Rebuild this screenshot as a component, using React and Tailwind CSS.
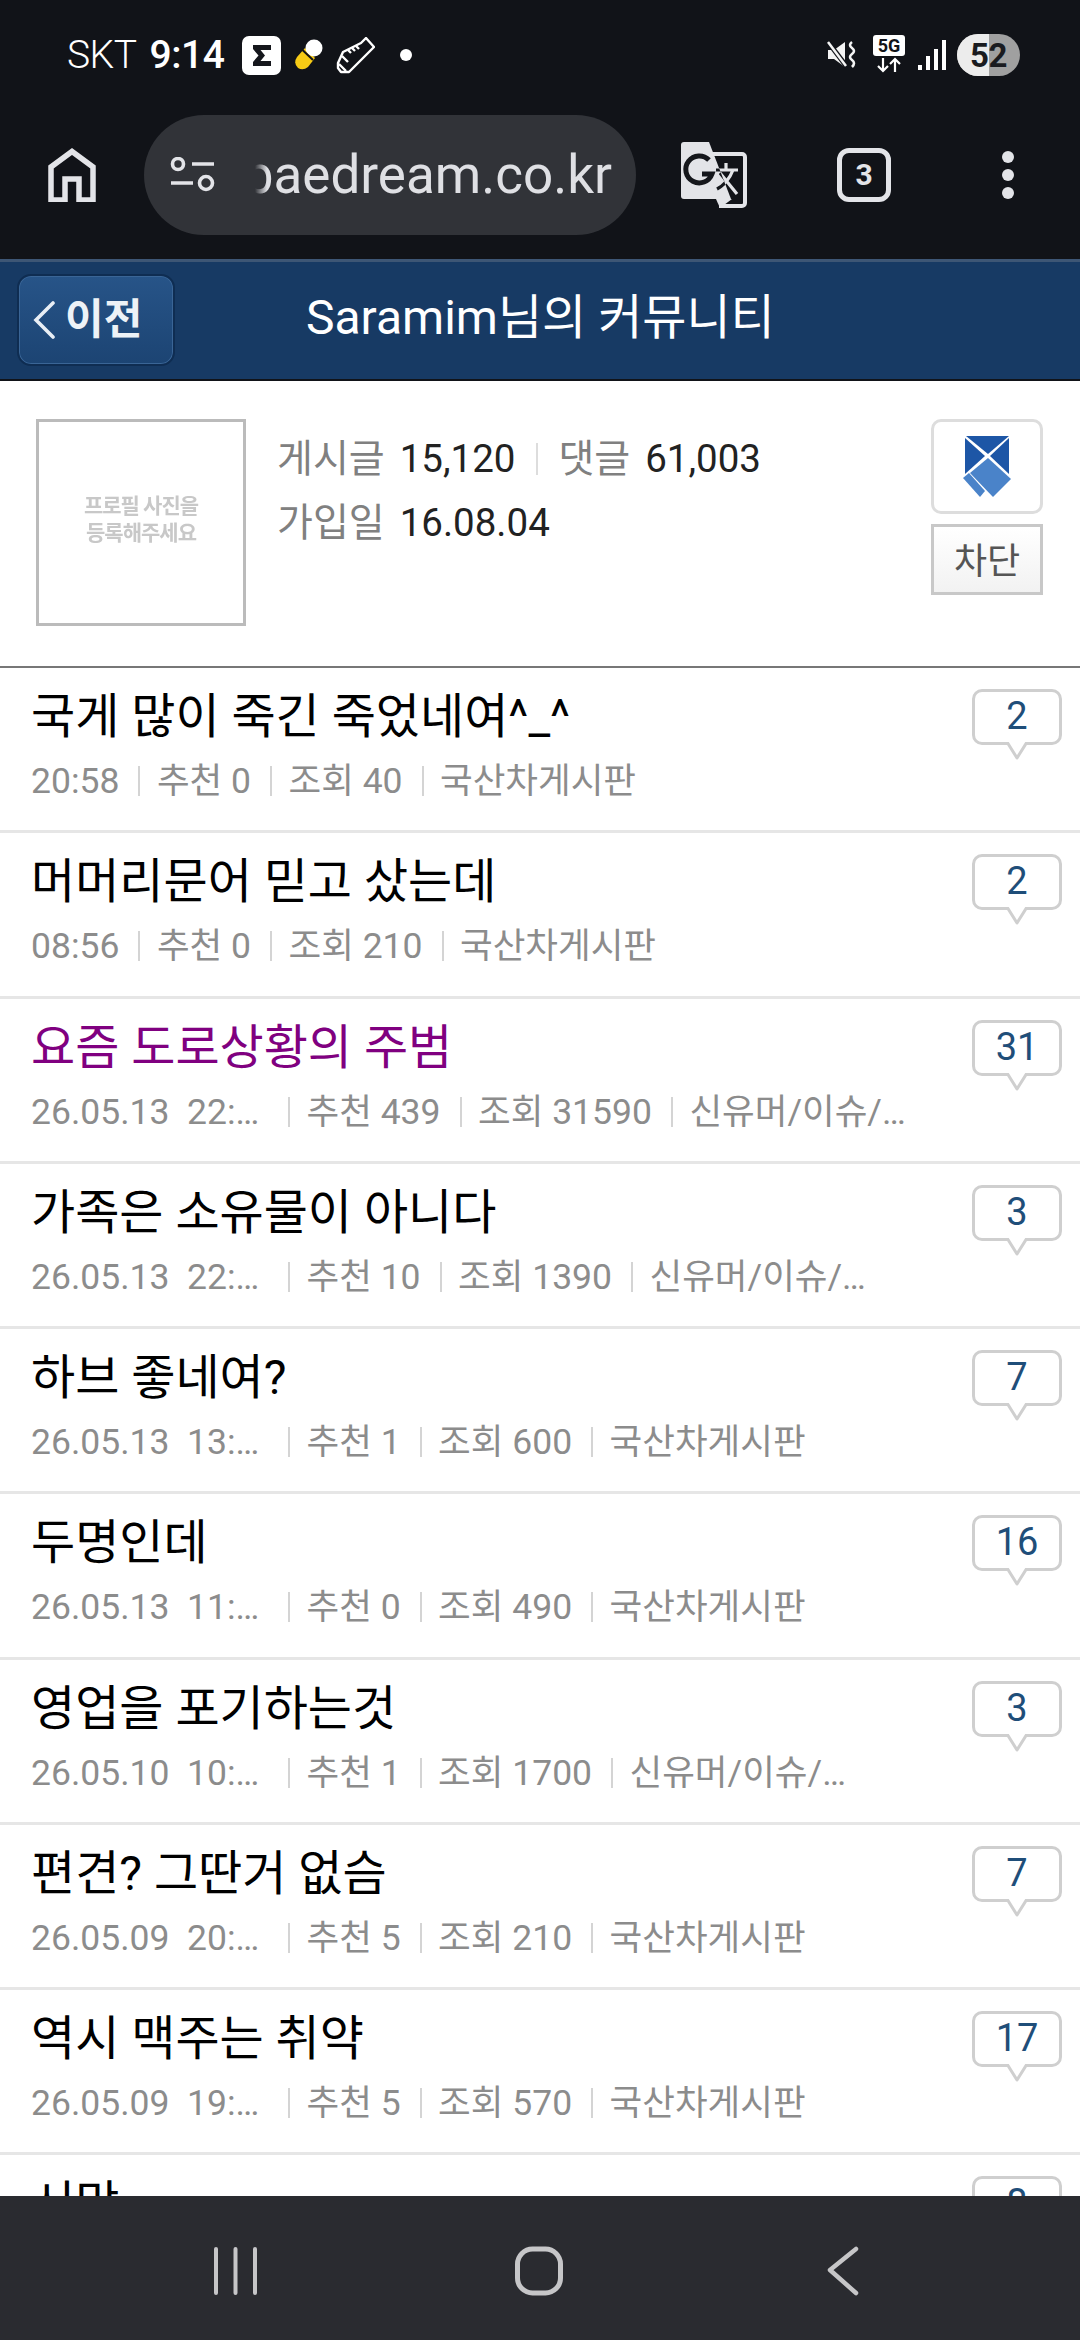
import React from 'react';

const FONT = 'font-["Roboto","Noto_Sans_CJK_KR",sans-serif]';

// last row is cut by the nav bar, only its title and count show
const POSTS = [
  { title: '국게 많이 죽긴 죽었네여^_^', time: '20:58', like: 0, view: 40, board: '국산차게시판', count: 2 },
  { title: '머머리문어 믿고 샀는데', time: '08:56', like: 0, view: 210, board: '국산차게시판', count: 2 },
  { title: '요즘 도로상황의 주범', date: '26.05.13', time: '22:…', like: 439, view: 31590, board: '신유머/이슈/…', count: 31, visited: true },
  { title: '가족은 소유물이 아니다', date: '26.05.13', time: '22:…', like: 10, view: 1390, board: '신유머/이슈/…', count: 3 },
  { title: '하브 좋네여?', date: '26.05.13', time: '13:…', like: 1, view: 600, board: '국산차게시판', count: 7 },
  { title: '두명인데', date: '26.05.13', time: '11:…', like: 0, view: 490, board: '국산차게시판', count: 16 },
  { title: '영업을 포기하는것', date: '26.05.10', time: '10:…', like: 1, view: 1700, board: '신유머/이슈/…', count: 3 },
  { title: '편견? 그딴거 없슴', date: '26.05.09', time: '20:…', like: 5, view: 210, board: '국산차게시판', count: 7 },
  { title: '역시 맥주는 취약', date: '26.05.09', time: '19:…', like: 5, view: 570, board: '국산차게시판', count: 17 },
  { title: '시망', count: 8 },
];

const Sep = () => <span className="w-[2px] h-[30px] bg-[#d4d4d4] ml-[19px] mr-[16.5px] shrink-0" />;

const StatusBar = () => (
  <div className="h-[115px] flex items-center pb-[5px] text-white relative">
    <span className="ml-[67px] text-[39px] leading-none font-light tracking-[-0.5px]">SKT</span>
    <span className="ml-[13px] text-[39px] leading-none font-medium tracking-[-0.5px]">9:14</span>
    {/* app notification icons */}
    <svg className="ml-[18px]" width="39" height="39" viewBox="0 0 39 39">
      <rect width="39" height="39" rx="7" fill="#fff" />
      <path d="M11 9H29V14H18.5L23 19.5L18.5 25H29V30H11V26L16.5 19.5L11 13Z" fill="#15171c" />
    </svg>
    <svg className="ml-[14px]" width="28" height="32" viewBox="0 0 28 32">
      <path d="M10 9L20 19L13 28Q8 32 3 29Q-2 24 2 18Z" fill="#f7cb15" />
      <circle cx="19" cy="9" r="8.5" fill="#fff" />
      <path d="M7.5 11L18 21" stroke="#111318" strokeWidth="2" />
    </svg>
    <svg className="ml-[13px]" width="39" height="37" viewBox="0 0 39 37" fill="none" stroke="#fff" strokeWidth="2.4" strokeLinejoin="round">
      <path d="M2 26L7 15L25 6L30 1L38 10L13 35L5 35L2 31Z" />
      <path d="M3 27L10 34M6 19L12 25M12 13L15 16M16 11L19 14M20 9L23 12" />
    </svg>
    <span className="ml-[25px] w-3 h-3 rounded-full bg-white" />

    {/* system icons */}
    <div className="absolute left-[827px] top-[34px] flex items-center">
      <svg width="30" height="32" viewBox="0 0 30 32">
        <path d="M1 11H7L18 3V23ZM1 11V20H7L18 28V23Z" fill="#f4f4f4" />
        <path d="M1 3L20 28" stroke="#111318" strokeWidth="5" />
        <path d="M1 3L19 27" stroke="#f4f4f4" strokeWidth="2.5" />
        <path d="M25 3Q21 6 25 9T25 15T25 21T25 28" stroke="#f4f4f4" strokeWidth="2.6" fill="none" />
      </svg>
      <svg className="ml-[16px] -mt-[2px]" width="32" height="38" viewBox="0 0 32 38">
        <rect width="32" height="21" rx="3" fill="#fff" />
        <text x="16" y="17" textAnchor="middle" fontSize="18" fontWeight="700" fontFamily="Roboto" fill="#111318">5G</text>
        <path d="M10 23V36M5 31L10 36L15 31M22 37V24M17 29L22 24L27 29" stroke="#fff" strokeWidth="2.2" fill="none" />
      </svg>
      <svg className="ml-[13px]" width="28" height="30" viewBox="0 0 28 30" fill="#fff">
        <rect x="0" y="25" width="4" height="5" />
        <rect x="8" y="16" width="4" height="14" />
        <rect x="16" y="9" width="4" height="21" />
        <rect x="24" y="0" width="4" height="30" />
      </svg>
      <div className="ml-[11px] w-[63px] h-[42px] rounded-full overflow-hidden relative bg-[#a0a0a0] flex items-center justify-center">
        <span className="absolute left-0 top-0 bottom-0 w-[32px] bg-[#ececec]" />
        <span className="relative text-[33px] font-bold leading-none text-[#1a1b20] tracking-[-0.5px]">52</span>
      </div>
    </div>
  </div>
);

const Toolbar = () => (
  <div className="h-[144px] flex items-start relative">
    <svg className="absolute left-[48px] top-[33px]" width="48" height="54" viewBox="0 0 48 54" fill="none" stroke="#e3e4e8" strokeWidth="5.5">
      <path d="M3 52V19L24 3.5L45 19V52H31V31H17V52Z" />
    </svg>
    <div className="absolute left-[144px] top-0 w-[492px] h-[120px] rounded-full bg-[#313338]">
      <svg className="absolute left-[26px] top-[42px]" width="46" height="40" viewBox="0 0 46 40" fill="none" stroke="#e3e4e8" strokeWidth="3.6">
        <circle cx="8" cy="7" r="5.5" />
        <path d="M22 7H44M1 26H23" />
        <circle cx="36" cy="26" r="6.5" />
      </svg>
      <div className="absolute left-[99px] top-0 w-[369px] h-[120px] overflow-hidden flex items-center justify-end">
        <span className="text-[53px] leading-none text-[#dfe0e4] whitespace-nowrap">baedream.co.kr</span>
        <span className="absolute left-0 top-0 bottom-0 w-[24px] bg-gradient-to-r from-[#313338] via-[#313338] to-transparent" />
      </div>
    </div>
    <svg className="absolute left-[681px] top-[27px]" width="66" height="66" viewBox="0 0 66 66" fill="none">
      <defs>
        <clipPath id="leftPage">
          <path d="M3 0H28L50 57H3a3 3 0 0 1-3-3V3a3 3 0 0 1 3-3z" />
        </clipPath>
      </defs>
      <path d="M31 12H61a3 3 0 0 1 3 3V61a3 3 0 0 1-3 3H38" stroke="#e3e4e8" strokeWidth="4" />
      <path d="M35 57H51L39 66Z" fill="#e3e4e8" />
      <path d="M45 21V27M35 28H57M52 28Q47 41 36 47M39 31L56 52" stroke="#e3e4e8" strokeWidth="3.2" />
      <path d="M3 0H28L50 57H3a3 3 0 0 1-3-3V3a3 3 0 0 1 3-3z" fill="#e3e4e8" />
      <g clipPath="url(#leftPage)">
        <path d="M45 21V27M35 28H57M52 28Q47 41 36 47M39 31L56 52" stroke="#15171c" strokeWidth="3.2" />
      </g>
      <path d="M32 18A13.5 13.5 0 1 0 35 32H25" stroke="#15171c" strokeWidth="5" transform="translate(-4 0)" />
    </svg>
    <div className="absolute left-[837px] top-[33px] w-[54px] h-[54px] rounded-[12px] border-[5px] border-[#e3e4e8] flex items-center justify-center text-[#e3e4e8] text-[30px] font-bold leading-none">
      3
    </div>
    <div className="absolute left-[1002px] top-[36px] flex flex-col gap-[6px]">
      <span className="w-3 h-3 rounded-full bg-[#e3e4e8]" />
      <span className="w-3 h-3 rounded-full bg-[#e3e4e8]" />
      <span className="w-3 h-3 rounded-full bg-[#e3e4e8]" />
    </div>
  </div>
);

const SiteHeader = () => (
  <div className="h-[122px] bg-[#173a64] border-t-[3px] border-t-[#3d5675] border-b-[2px] border-b-[#111318] flex items-center pl-[17px]">
    <div className="w-[158px] h-[92px] -mt-[2px] rounded-[14px] border-2 border-[#0f2d52] bg-gradient-to-b from-[#275488] to-[#1c4473] flex items-center pl-[14px] shadow-[inset_0_0_0_1px_#3a6596]">
      <svg width="22" height="38" viewBox="0 0 22 38" fill="none" stroke="#e8eef5" strokeWidth="3.6" strokeLinecap="round">
        <path d="M20 2L3 19L20 36" />
      </svg>
      <span className="ml-[10px] text-[42px] leading-none font-bold text-[#edf2f7]">이전</span>
    </div>
    <span className="ml-[131px] -mt-[5px] text-[48px] leading-none text-white">Saramim님의 커뮤니티</span>
  </div>
);

const Profile = () => (
  <div className="h-[287px] bg-white border-b-[2px] border-b-[#777] flex items-start relative">
    <div className="ml-[36px] mt-[38px] w-[210px] h-[207px] border-[3px] border-[#bbb] flex flex-col items-center justify-center pb-[6px] text-[21px] leading-[27px] font-bold text-[#c8c8c8] tracking-[-1px] blur-[0.4px]">
      <span>프로필 사진을</span>
      <span>등록해주세요</span>
    </div>
    <div className="ml-[31px] mt-[46px] text-[38.5px] text-[#222]">
      <div className="h-16 flex items-center">
        <span className="text-[#808080] text-[39px]">게시글</span>
        <span className="ml-[15px]">15,120</span>
        <span className="w-[2px] h-[32px] bg-[#ddd] ml-[21px] mr-[20px]" />
        <span className="text-[#808080] text-[39px]">댓글</span>
        <span className="ml-[15px]">61,003</span>
      </div>
      <div className="h-16 flex items-center">
        <span className="text-[#808080] text-[39px]">가입일</span>
        <span className="ml-[15px]">16.08.04</span>
      </div>
    </div>
    <div className="absolute left-[931px] top-[38px] w-[112px] flex flex-col gap-[10px]">
      <div className="h-[95px] rounded-[10px] border-[3px] border-[#ddd] flex items-center justify-center">
        <svg width="48" height="61" viewBox="0 0 48 61">
          <path d="M3 0H46L25 18Z" fill="#1d56a6" />
          <path d="M2 2L22 20L2 38Z" fill="#1d56a6" />
          <path d="M46 2V38L27 20Z" fill="#1d56a6" />
          <path d="M25 22L48 43L30 61L7 37Z" fill="#4a83c9" />
          <path d="M0 42L6 37L22 55L17 61Z" fill="#4a83c9" />
        </svg>
      </div>
      <div className="h-[71px] pt-[4px] border-[3px] border-[#c8c8c8] bg-gradient-to-b from-white to-[#f2f2f2] flex items-center justify-center text-[36px] leading-none text-[#555]">
        차단
      </div>
    </div>
  </div>
);

const CountBubble = ({ count }) => (
  <div className="absolute left-[972px] top-[21px] w-[90px] h-[56px] pb-[2px] rounded-[10px] border-[3px] border-[#cfcfcf] bg-white flex items-center justify-center text-[38px] leading-none text-[#1f4e79]">
    {count}
    <svg className="absolute left-[31px] top-[50px]" width="22" height="18" viewBox="0 0 22 18">
      <path d="M1 0L11 16L21 0" fill="#fff" stroke="#cfcfcf" strokeWidth="3" strokeLinejoin="round" />
    </svg>
  </div>
);

const PostRow = ({ post }) => (
  <div className="h-[165.25px] shrink-0 border-b-[3px] border-b-[#e6e6e6] relative pl-[31px]">
    <div className={`pt-[19px] h-[60px] box-content text-[48px] leading-[60px] whitespace-nowrap ${post.visited ? 'text-[#800080]' : 'text-black'}`}>
      {post.title}
    </div>
    {post.time && (
      <div className="mt-[11px] h-[46px] flex items-center text-[35.5px] leading-[46px] text-[#8c8c8c] whitespace-nowrap">
        {post.date ? (
          <span className="w-[238px] whitespace-pre">{post.date}  {post.time}</span>
        ) : (
          <span>{post.time}</span>
        )}
        <Sep />
        <span>추천 {post.like}</span>
        <Sep />
        <span>조회 {post.view}</span>
        <Sep />
        <span>{post.board}</span>
      </div>
    )}
    <CountBubble count={post.count} />
  </div>
);

const NavBar = () => (
  <div className="h-[144px] shrink-0 bg-[#2a2b30] relative z-10 flex items-start">
    <svg className="ml-[213px] mt-[51px]" width="45" height="48" viewBox="0 0 45 48" stroke="#c6c6c8" strokeWidth="4" strokeLinecap="round">
      <path d="M3 2V46M22.5 2V46M42 2V46" />
    </svg>
    <svg className="ml-[257px] mt-[50px]" width="48" height="50" viewBox="0 0 48 50" fill="none" stroke="#c6c6c8" strokeWidth="5">
      <rect x="2.5" y="3" width="43" height="44" rx="15" />
    </svg>
    <svg className="ml-[264px] mt-[50px]" width="32" height="50" viewBox="0 0 32 50" fill="none" stroke="#c6c6c8" strokeWidth="4.5" strokeLinecap="round" strokeLinejoin="round">
      <path d="M29 3L3 24L29 47" />
    </svg>
  </div>
);

export default function App() {
  return (
    <div className={`w-[1080px] h-[2340px] overflow-hidden flex flex-col bg-white ${FONT}`}>
      <div className="h-[259px] shrink-0 bg-[#111318]">
        <StatusBar />
        <Toolbar />
      </div>
      <SiteHeader />
      <Profile />
      <div className="flex-1 min-h-0 overflow-hidden">
        {POSTS.map((post) => (
          <PostRow key={post.title} post={post} />
        ))}
      </div>
      <NavBar />
    </div>
  );
}
